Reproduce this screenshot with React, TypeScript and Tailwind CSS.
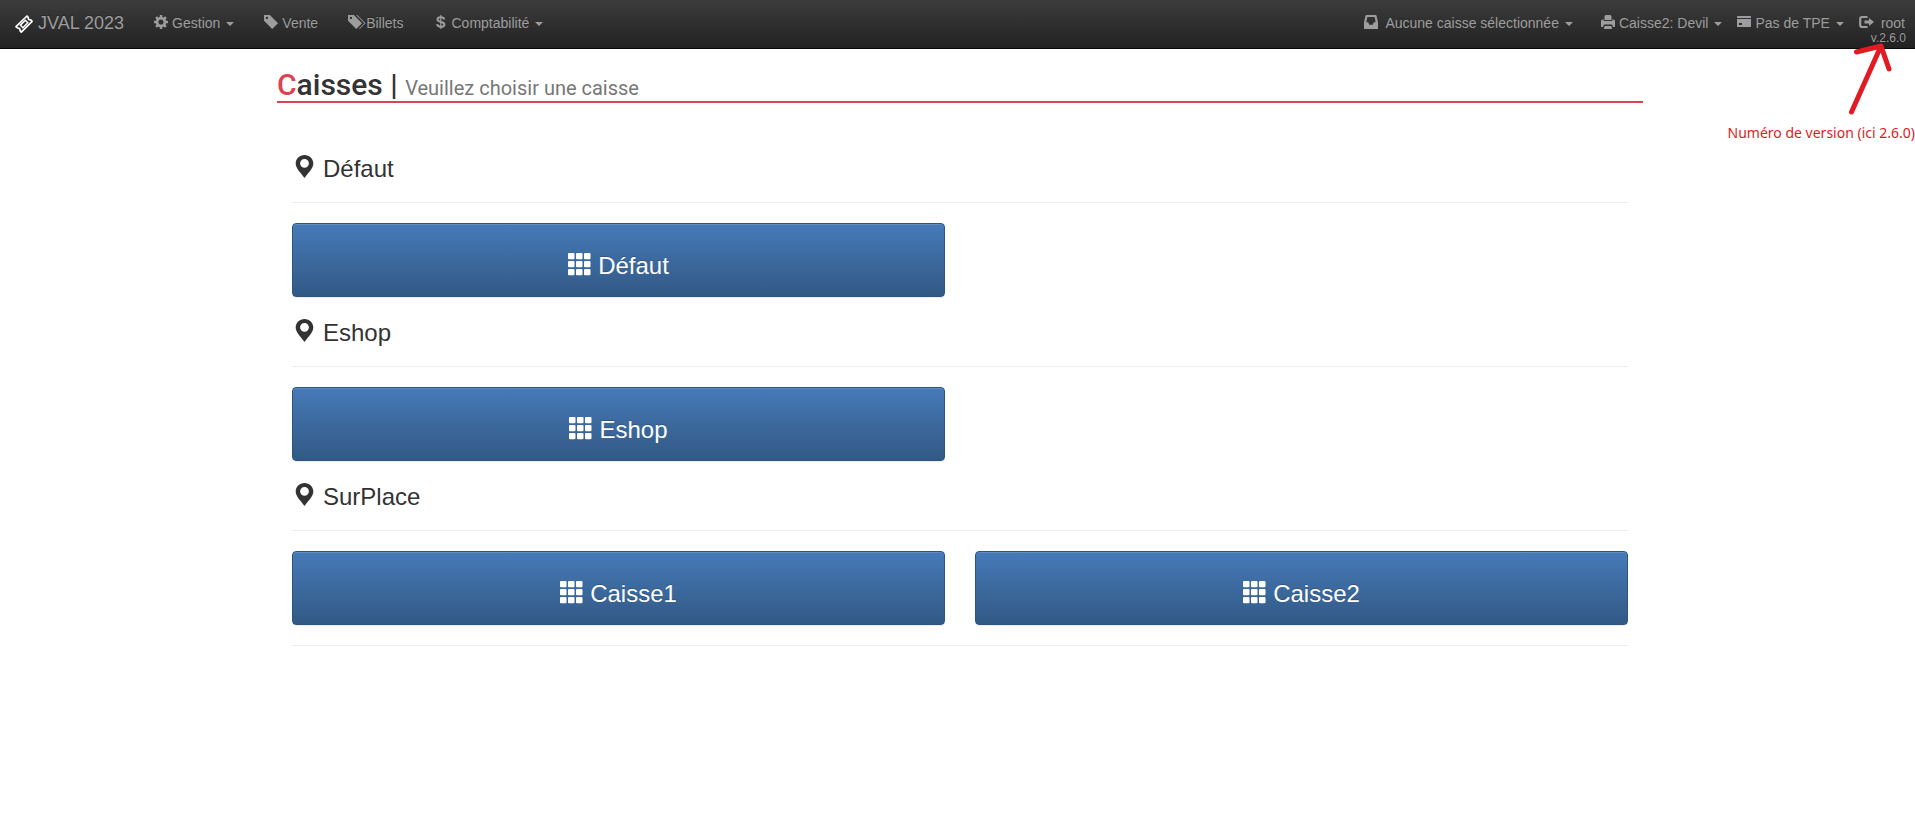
import type { ReactNode } from "react";

const places = [
  { name: "Défaut", registers: ["Défaut"] },
  { name: "Eshop", registers: ["Eshop"] },
  { name: "SurPlace", registers: ["Caisse1", "Caisse2"] },
];

export default function App() {
  return (
    <div className="relative overflow-x-hidden bg-white font-['Liberation_Sans',Arial,sans-serif] text-sm text-[#333]">
      <Navbar />
      <VersionNote />
      <div className="pl-[5px]">
        <main className="mx-auto max-w-[1366px] pt-[19px]">
          <h1 className="border-b-2 border-[#de4250] font-[Roboto,sans-serif] text-[30px] leading-[33px] font-medium">
            <span className="text-[#de4250]">C</span>aisses |{" "}
            <small className="text-[20px] leading-none font-normal text-[#777]">Veuillez choisir une caisse</small>
          </h1>
          <div className="px-[15px] pt-[53px]">
            <div className="flex flex-col gap-[23px]">
              {places.map(place => (
                <Place key={place.name} name={place.name} registers={place.registers} />
              ))}
            </div>
            <hr className="mt-5 border-[#eee]" />
          </div>
        </main>
      </div>
    </div>
  );
}

function Navbar() {
  return (
    <nav className="flex min-h-[49px] flex-wrap items-start justify-between border-b border-[#080808] bg-linear-to-b from-[#3c3c3c] to-[#222] pt-[13px] pr-[9px] text-[#9d9d9d] [text-shadow:0_-1px_0_rgba(0,0,0,0.25)]">
      <div className="flex items-start">
        <a href="#" className="flex items-start gap-[5px] px-[15px] text-lg leading-5">
          <TicketIcon />
          JVAL 2023
        </a>
        <NavItem icon={<CogIcon />} label="Gestion" caret />
        <NavItem icon={<TagIcon />} label="Vente" />
        <NavItem icon={<TagsIcon />} label="Billets" tight />
        <NavItem icon={<UsdIcon />} label="Comptabilité" caret />
      </div>
      <div className="flex items-start">
        <div className="pr-[13px]">
          <NavItem icon={<InboxIcon />} label="Aucune caisse sélectionnée" caret wide />
        </div>
        <div className="flex items-start gap-[15px]">
          <NavButton icon={<PrintIcon />} label="Caisse2: Devil" />
          <NavButton icon={<CardIcon />} label="Pas de TPE" />
          <a href="#" className="flex flex-col items-end">
            <span className="flex items-start gap-2 pr-px leading-5">
              <LogOutIcon />
              root
            </span>
            <span className="text-xs leading-[10px]">v.2.6.0</span>
          </a>
        </div>
      </div>
    </nav>
  );
}

type NavItemProps = { icon: ReactNode; label: string; caret?: boolean; wide?: boolean; tight?: boolean };

function NavItem({ icon, label, caret, wide, tight }: NavItemProps) {
  const gap = wide ? "gap-[7px]" : tight ? "gap-0" : "gap-1";
  if (caret) {
    return (
      <button type="button" className={`flex items-start px-[15px] leading-5 ${gap}`}>
        {icon}
        <span>{label}<Caret /></span>
      </button>
    );
  }
  return (
    <a href="#" className={`flex items-start px-[15px] leading-5 ${gap}`}>
      {icon}
      {label}
    </a>
  );
}

function NavButton({ icon, label }: { icon: ReactNode; label: string }) {
  return (
    <button type="button" className="flex items-start gap-1 leading-5">
      {icon}
      <span>{label}<Caret /></span>
    </button>
  );
}

function Caret() {
  return <span className="ml-1.5 inline-block border-x-4 border-t-4 border-x-transparent border-t-current align-middle" />;
}

function Place({ name, registers }: { name: string; registers: string[] }) {
  return (
    <section>
      <h3 className="flex items-start gap-[7px] text-2xl leading-[26px]">
        <MarkerIcon />
        {name}
      </h3>
      <hr className="my-5 border-[#eee]" />
      <div className="grid grid-cols-2 gap-[30px]">
        {registers.map(register => (
          <button
            key={register}
            type="button"
            className="flex items-start justify-center gap-1.5 rounded border border-[#2b5580] bg-linear-to-b from-[#467ab8] to-[#325985] pt-[29px] pb-[17px] text-2xl leading-[26px] text-white shadow-[inset_0_1px_0_rgba(255,255,255,0.15),0_1px_1px_rgba(0,0,0,0.075)] [text-shadow:0_-1px_0_rgba(0,0,0,0.2)]"
          >
            <GridIcon />
            {register}
          </button>
        ))}
      </div>
    </section>
  );
}

// red arrow and caption laid over the top right corner
function VersionNote() {
  return (
    <div className="pointer-events-none absolute top-[42px] right-0 flex flex-col items-end text-[#e01b24]">
      <svg className="mr-5 h-[76px] w-11 overflow-visible" viewBox="0 0 44 76" fill="none" stroke="currentColor" strokeWidth="5" strokeLinecap="round" strokeLinejoin="round">
        <path d="M.5 70L30 4M5.500 10L30 4L38 27" />
      </svg>
      <p className="font-['Noto_Sans',sans-serif] text-sm leading-[30px] whitespace-nowrap">Numéro de version (ici 2.6.0)</p>
    </div>
  );
}

function TicketIcon() {
  return (
    <svg className="mt-0.5 size-[18px] text-white" viewBox="0 0 18 18" fill="none" stroke="currentColor">
      <path strokeWidth="1.700" strokeLinejoin="round" d="M1 11.600L12 1L13.300 2.500Q12.900 5 15.700 4.900L17.100 6.300L6.300 17.100L5 15.600Q5.300 12.800 2.500 13Z" />
      <path strokeWidth="1.500" d="M5.400 10.100L10.300 5.200L12.800 7.800L7.900 12.700Z" />
    </svg>
  );
}

function CogIcon() {
  return (
    <svg className="mt-0.5 size-3.5" viewBox="0 0 14 14" fill="none" stroke="currentColor">
      <circle cx="7" cy="7" r="3.900" strokeWidth="2.700" />
      <path strokeWidth="2.500" d="M7 0v2.400M7 11.600V14M0 7h2.400M11.600 7H14M2.050 2.050l1.700 1.700M10.250 10.250l1.700 1.700M2.050 11.950l1.700-1.700M10.250 3.750l1.700-1.700" />
    </svg>
  );
}

function TagIcon() {
  return (
    <svg className="mt-0.5 size-3.5" viewBox="0 0 1200 1200" fill="currentColor" fillRule="evenodd">
      <path d="M1 500V25Q1 15 8.500 7.500T26 0H500L1200 700L700 1200ZM148 247a101 101 0 1 0 202 0a101 101 0 1 0 -202 0Z" />
    </svg>
  );
}

function TagsIcon() {
  return (
    <svg className="mt-0.5 h-3.5 w-[18px]" viewBox="0 0 1540 1200" fill="currentColor" fillRule="evenodd">
      <path d="M2 500V25Q2 14 9 7T27 0H501L1201 700L701 1200ZM148 247a101 101 0 1 0 202 0a101 101 0 1 0 -202 0ZM701 0H801L1501 700L1001 1200L951 1150L1401 700Z" />
    </svg>
  );
}

function UsdIcon() {
  return (
    <svg className="mt-0.5 size-3.5" viewBox="0 0 14 14" fill="none" stroke="currentColor">
      <path strokeWidth="2" d="M10.200 4.500C10 2.900 8.700 2.200 6.800 2.200C4.800 2.200 3.500 3.100 3.500 4.500C3.500 7.900 10.400 5.900 10.400 9.400C10.400 11 8.900 11.800 6.800 11.800C4.600 11.800 3.300 10.900 3.100 9.200" />
      <path strokeWidth="1.200" d="M6.800 0v14" />
    </svg>
  );
}

function InboxIcon() {
  return (
    <svg className="mt-0.5 size-3.5" viewBox="0 0 14 14" fill="currentColor" fillRule="evenodd">
      <path d="M2.300 0h9.400q.6 0 .8.600L14 7.500V13.500q0 .5-.5.500H.5q-.5 0-.5-.5V7.500L1.500.600Q1.700 0 2.300 0ZM3.400 2L2.300 7.300H4.200L5.200 9.700H8.800L9.800 7.300H11.700L10.600 2Z" />
    </svg>
  );
}

function PrintIcon() {
  return (
    <svg className="mt-0.5 size-3.5" viewBox="0 0 14 14" fill="currentColor">
      <path d="M4.500 0h5l1 1.200V5h-7V1.200ZM1 4.500h1.700V6h8.600V4.500H13q1 .5 1 1.500v5.500q0 .5-.5.500H12l-1-2.500H3L2 12H.5q-.5 0-.5-.5V6q0-1 1-1.500ZM3.700 11h6.600l.9 3H2.800Z" />
    </svg>
  );
}

function CardIcon() {
  return (
    <svg className="mt-0.5 size-3.5" viewBox="0 0 14 14" fill="currentColor" fillRule="evenodd">
      <path d="M.5 1h13q.5 0 .5.500V3H0V1.500q0-.5.500-.5ZM0 4h14v7.500q0 .5-.5.500H.5q-.5 0-.5-.5ZM2 8v2h3v-2Z" />
    </svg>
  );
}

function LogOutIcon() {
  return (
    <svg className="mt-0.5 size-3.5 overflow-visible" viewBox="0 0 14 14" fill="none">
      <path d="M8.500 2H3.200Q1.200 2 1.200 4v6q0 2 2 2H8.500" stroke="currentColor" strokeWidth="2.200" />
      <path d="M5.500 5.600H10V3L15 7L10 11V8.400H5.500Z" fill="currentColor" />
    </svg>
  );
}

function MarkerIcon() {
  return (
    <svg className="size-6 overflow-visible" viewBox="0 1 24 24" fill="currentColor" fillRule="evenodd">
      <path d="M12.500 0C17.600 0 21.300 3.700 21.300 8.500C21.300 13 16.500 17.600 12.500 23C8.500 17.600 3.700 13 3.700 8.500C3.700 3.700 7.400 0 12.500 0ZM12.500 3.900a4.400 4.400 0 1 0 0 8.800a4.400 4.400 0 1 0 0-8.800Z" />
    </svg>
  );
}

function GridIcon() {
  return (
    <svg className="size-6" viewBox="0 0 24 24" fill="currentColor">
      {[0, 8, 16].map(y => [0, 8, 16].map(x => <rect key={`${x}-${y}`} x={x} y={y} width="6.500" height="6.200" rx="1" />))}
    </svg>
  );
}
